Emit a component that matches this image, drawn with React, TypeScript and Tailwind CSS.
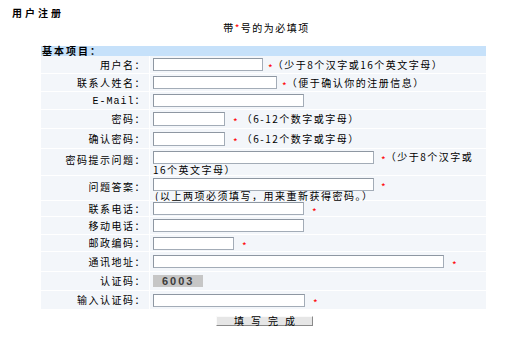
import React from 'react'

const cjk = "font-['Noto_Sans_CJK_SC',sans-serif]"

function Field({ className }: { className: string }) {
  return (
    <input
      type="text"
      className={`h-[13px] shrink-0 bg-white border border-[#a3acb7] border-t-[#8e97a2] border-l-[#8e97a2] outline-none ${className}`}
    />
  )
}

function Star({ className = 'ml-[5px]' }: { className?: string }) {
  return <span className={`text-[#ff0000] text-[10px] leading-[10px] tracking-normal mt-[6px] ${className}`}>*</span>
}

function Row({
  label,
  h,
  tall,
  children,
}: {
  label: React.ReactNode
  h: string
  tall?: boolean
  children: React.ReactNode
}) {
  return (
    <div className={`flex border-b border-white ${h}`}>
      <div
        className={`w-[109px] shrink-0 bg-[#f3f6fa] border-r border-white flex justify-end pr-[3px] ${
          tall ? 'items-start pt-[5px]' : 'items-center'
        }`}
      >
        <span className="leading-[12px] whitespace-nowrap">{label}</span>
      </div>
      <div className={`flex-1 bg-[#f3f6fa] pl-[3px] flex ${tall ? 'flex-col justify-start pt-[2px]' : 'items-center'}`}>
        {children}
      </div>
    </div>
  )
}

export default function App() {
  return (
    <div className={`w-[506px] h-[337px] bg-white text-black text-[10px] tracking-[1.5px] overflow-hidden ${cjk}`}>
      {/* Title */}
      <div className="pt-[5px] pl-[12px]">
        <div className="h-[15px] leading-[15px] text-[10px] font-bold tracking-[3px]">用户注册</div>
      </div>

      <div className="ml-[41px] w-[445px]">
        <div className="h-[16px] leading-[16px] text-center pl-[6px]">
          带<span className="text-[#ff0000]">*</span>号的为必填项
        </div>

        {/* Section header */}
        <div className="mt-[10px] h-[10px] leading-[10px] bg-[#c6e1fa] pl-[1px] font-bold tracking-[2px]">
          基本项目：
        </div>

        <Row label="用户名：" h="h-[18px]">
          <Field className="w-[110px]" />
          <Star />
          <span className="leading-[12px] whitespace-nowrap">（少于8个汉字或16个英文字母）</span>
        </Row>

        <Row label="联系人姓名：" h="h-[18px]">
          <Field className="w-[124px]" />
          <Star />
          <span className="leading-[12px] whitespace-nowrap">（便于确认你的注册信息）</span>
        </Row>

        <Row
          label={
            <>
              <span className="font-['Liberation_Mono',monospace] tracking-[1px]">E-Mail</span>：
            </>
          }
          h="h-[18px]"
        >
          <Field className="w-[151px]" />
        </Row>

        <Row label="密码：" h="h-[19px]">
          <Field className="w-[72px] h-[14px]" />
          <Star className="ml-[8px]" />
          <span className="leading-[12px] whitespace-nowrap ml-[4px]">（6-12个数字或字母）</span>
        </Row>

        <Row label="确认密码：" h="h-[20px]">
          <Field className="w-[72px] h-[14px]" />
          <Star className="ml-[8px]" />
          <span className="leading-[12px] whitespace-nowrap ml-[4px]">（6-12个数字或字母）</span>
        </Row>

        <Row label="密码提示问题：" h="h-[27px]" tall>
          <div className="flex items-center h-[12px]">
            <Field className="w-[221px] h-[12px]" />
            <Star className="ml-[7px]" />
            <span className="leading-[12px] whitespace-nowrap">（少于8个汉字或</span>
          </div>
          <div className="leading-[10px] mt-[2px] whitespace-nowrap">16个英文字母）</div>
        </Row>

        <Row label="问题答案：" h="h-[25px]" tall>
          <div className="flex items-start h-[11px]">
            <Field className="w-[221px] h-[11px]" />
            <Star className="ml-[7px] !mt-[4px]" />
          </div>
          <div className="leading-[10px] mt-[2px] pl-[2px] whitespace-nowrap">
            (以上两项必须填写，用来重新获得密码。）
          </div>
        </Row>

        <Row label="联系电话：" h="h-[16px]">
          <Field className="w-[151px] h-[12px]" />
          <Star className="ml-[8px]" />
        </Row>

        <Row label="移动电话：" h="h-[18px]">
          <Field className="w-[151px] h-[12px]" />
        </Row>

        <Row label="邮政编码：" h="h-[17px]">
          <Field className="w-[81px] h-[12px]" />
          <Star className="ml-[8px]" />
        </Row>

        <Row label="通讯地址：" h="h-[20px]">
          <Field className="w-[291px] h-[12px]" />
          <Star className="ml-[8px]" />
        </Row>

        <Row label="认证码：" h="h-[19px]">
          <div className="w-[50px] h-[12px] bg-[#c6c6c6] pl-[9px] flex items-center font-['Liberation_Sans',sans-serif] font-semibold text-[11px] tracking-[2px] text-[#3c3c3c]">
            6003
          </div>
        </Row>

        <Row label="输入认证码：" h="h-[19px]">
          <Field className="w-[152px]" />
          <Star className="ml-[8px]" />
        </Row>

        {/* Submit */}
        <div className="flex justify-center mt-[6px] pl-[2px]">
          <button
            type="button"
            className="w-[97px] h-[10px] leading-[8px] bg-[#e6e6e6] border border-[#fafafa] border-r-[#8a8a8a] border-b-[#8a8a8a] text-[10px] tracking-[7px] pl-[7px] text-center"
          >
            填写完成
          </button>
        </div>
      </div>
    </div>
  )
}
